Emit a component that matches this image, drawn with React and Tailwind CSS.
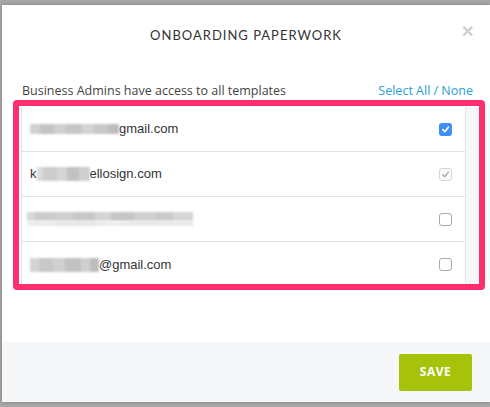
import React from "react";

function Check({ state }) {
  if (state === "on") {
    return (
      <div className="w-[13px] h-[13px] rounded-[3px] bg-[#3d8ff5] flex items-center justify-center">
        <svg width="9" height="9" viewBox="0 0 10 10"><path d="M2 5.2 L4.2 7.4 L8.2 2.4" stroke="#fff" strokeWidth="1.8" fill="none" strokeLinecap="round" strokeLinejoin="round" /></svg>
      </div>
    );
  }
  if (state === "dis") {
    return (
      <div className="w-[13px] h-[13px] rounded-[3px] border border-[#d4d4d4] bg-[#fafafa] flex items-center justify-center">
        <svg width="9" height="9" viewBox="0 0 10 10"><path d="M2 5.2 L4.2 7.4 L8.2 2.4" stroke="#a8a8a8" strokeWidth="1.5" fill="none" strokeLinecap="round" strokeLinejoin="round" /></svg>
      </div>
    );
  }
  return <div className="w-[13px] h-[13px] rounded-[3px] border border-[#a9a9a9] bg-white" />;
}

function BlurBar({ tones, h = 10 }) {
  return (
    <span className="inline-flex blur-[1px]">
      {tones.map((t, i) => (
        <span key={i} className="inline-block" style={{ width: t[0], height: h, background: t[1] }} />
      ))}
    </span>
  );
}

function Row({ children, state, last }) {
  return (
    <div className={"h-[45px] flex items-center justify-between pl-[8px] pr-[13px] " + (last ? "" : "border-b border-[#e3e3e3]")}>
      <div className="text-[13px] text-[#333] flex items-center">{children}</div>
      <Check state={state} />
    </div>
  );
}

export default function App() {
  return (
    <div className="w-[490px] h-[407px] bg-[#a8a8a8] pt-[5px] pl-[2px] pb-[5px] font-['Liberation_Sans',sans-serif]">
      <div className="h-[397px] bg-white flex flex-col shadow-[0_0_4px_rgba(0,0,0,0.25)]">
        <div className="relative h-[60px] flex items-center justify-center pt-[2px]">
          <div className="font-['Lato',sans-serif] text-[13px] tracking-[1px] text-[#333]">ONBOARDING PAPERWORK</div>
          <div className="absolute right-[16px] top-[19px] text-[#cfcfcf] text-[16px] font-bold leading-none">✕</div>
        </div>
        <div className="pl-[20px] pr-[17px] pt-[19px] flex justify-between items-end font-['Open_Sans',sans-serif] text-[12.5px] leading-[14px]">
          <span className="text-[#444]">Business Admins have access to all templates</span>
          <span className="text-[#2aa1d8]">Select All / None</span>
        </div>
        <div className="ml-[11px] mr-[5px] mt-[2px] rounded-[4px] border-[6px] border-[#ff2e6e] pt-[1px] pb-[0px]">
          <div className="flex h-[177px] border-l border-[#e0e0e0] ml-[2px] bg-white">
            <div className="flex-1">
              <Row state="on">
                <BlurBar tones={[[10, "#d2d2d2"], [14, "#c4c4c4"], [12, "#cfcfcf"], [16, "#c6c6c6"], [12, "#d4d4d4"], [14, "#c8c8c8"], [11, "#bdbdbd"]]} />
                <span>gmail.com</span>
              </Row>
              <Row state="dis">
                <span>k</span>
                <BlurBar tones={[[6, "#dadada"], [14, "#cdcdcd"], [10, "#d6d6d6"], [12, "#c2c2c2"], [11, "#cfcfcf"]]} h={14} />
                <span>ellosign.com</span>
              </Row>
              <Row state="off">
                <span className="ml-[-3px] flex flex-col">
                  <BlurBar tones={[[8, "#d8d8d8"], [20, "#cbcbcb"], [18, "#d0d0d0"], [22, "#c8c8c8"], [16, "#d4d4d4"], [24, "#c6c6c6"], [20, "#d0d0d0"], [18, "#cacaca"], [20, "#d6d6d6"]]} h={9} />
                  <BlurBar tones={[[30, "#ececec"], [40, "#e6e6e6"], [30, "#eeeeee"], [66, "#e8e8e8"]]} h={5} />
                </span>
              </Row>
              <Row state="off" last>
                <BlurBar tones={[[9, "#d4d4d4"], [14, "#c8c8c8"], [12, "#d0d0d0"], [16, "#c2c2c2"], [9, "#cfcfcf"], [9, "#bdbdbd"]]} h={14} />
                <span>@gmail.com</span>
              </Row>
            </div>
            <div className="w-[14px] bg-[#f7f7f7] border-l border-[#e6e6e6]" />
          </div>
        </div>
        <div className="flex-1" />
        <div className="h-[60px] bg-[#f6f7f9] flex items-center justify-end pr-[18px]">
          <button className="w-[73px] h-[37px] rounded-[2px] bg-[#a6c20a] text-white font-bold text-[12px] tracking-[0.5px] font-['Open_Sans',sans-serif]">SAVE</button>
        </div>
      </div>
    </div>
  );
}
